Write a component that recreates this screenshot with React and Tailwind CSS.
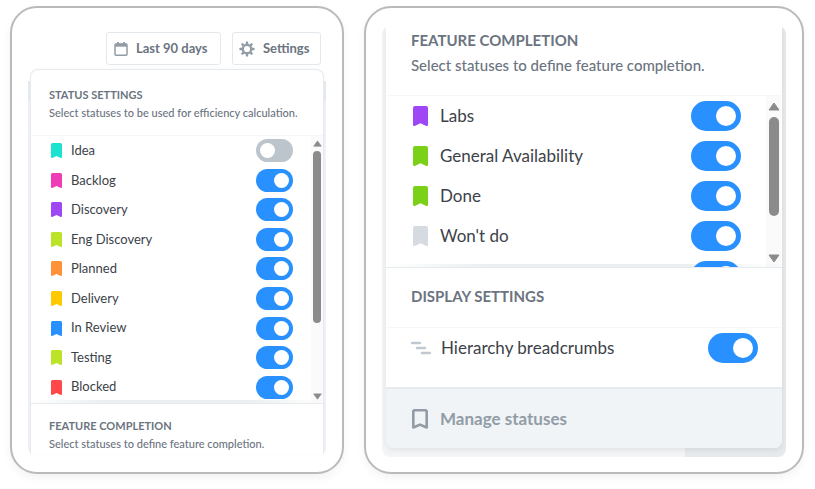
import { useState } from "react";

/* =========================================================
   DATA
========================================================= */
const efficiencyStatuses = [
    { name: "Idea", color: "text-[#1be3cf]", on: false },
    { name: "Backlog", color: "text-[#ef3eb5]", on: true },
    { name: "Discovery", color: "text-[#9f47f5]", on: true },
    { name: "Eng Discovery", color: "text-[#bbe327]", on: true },
    { name: "Planned", color: "text-[#ff9138]", on: true },
    { name: "Delivery", color: "text-[#ffc800]", on: true },
    { name: "In Review", color: "text-[#2891ff]", on: true },
    { name: "Testing", color: "text-[#bbe327]", on: true },
    { name: "Blocked", color: "text-[#ff4949]", on: true },
];

const completionStatuses = [
    { name: "Labs", color: "text-[#9f47f5]", on: true },
    { name: "General Availability", color: "text-[#7ad117]", on: true },
    { name: "Done", color: "text-[#7ad117]", on: true },
    { name: "Won't do", color: "text-[#d5dbe1]", on: true },
    { name: "", color: "text-transparent", on: true },
];

/* =========================================================
   ICONS
========================================================= */
function BookmarkIcon({ className }) {
    return (
        <svg viewBox="0 0 15 20" preserveAspectRatio="none" className={className} aria-hidden="true">
            <path
                d="M2 0h11a2 2 0 0 1 2 2v16.800c0 1-.8 1.500-1.700 1.100L7.500 17.300l-5.800 2.600C.8 20.300 0 19.800 0 18.800V2a2 2 0 0 1 2-2z"
                fill="currentColor"
            />
        </svg>
    );
}

function BookmarkOutlineIcon() {
    return (
        <svg viewBox="0 0 16 20" className="h-5 w-4" aria-hidden="true">
            <path
                d="M2.500 1.300h11a1.200 1.200 0 0 1 1.200 1.200v16L8 15.600l-6.700 2.900v-16a1.200 1.200 0 0 1 1.200-1.200z"
                fill="none"
                stroke="currentColor"
                strokeWidth="2.600"
                strokeLinejoin="round"
            />
        </svg>
    );
}

function CalendarIcon() {
    return (
        <svg viewBox="0 0 14 14" className="size-[14px]" fill="none" aria-hidden="true">
            <rect x="1" y="2" width="12" height="11.200" rx="1" stroke="currentColor" strokeWidth="1.500" />
            <path d="M1 3.200h12" stroke="currentColor" strokeWidth="3" />
            <path d="M4 0v3M10 0v3" stroke="currentColor" strokeWidth="1.800" />
        </svg>
    );
}

function GearIcon() {
    const teeth = [0, 45, 90, 135, 180, 225, 270, 315];

    return (
        <svg viewBox="-8 -8 16 16" className="size-4" aria-hidden="true">
            <circle r="4.200" fill="none" stroke="currentColor" strokeWidth="2.200" />
            {teeth.map((angle) => (
                <path
                    key={angle}
                    d="M-1.400 -4.800L-1 -7.600H1L1.400 -4.800z"
                    fill="currentColor"
                    transform={`rotate(${angle})`}
                />
            ))}
        </svg>
    );
}

function HierarchyIcon() {
    return (
        <svg viewBox="0 0 20 14" className="h-[14px] w-5" aria-hidden="true">
            <path
                d="M1 2h8M6 7h8M11 12h8"
                stroke="currentColor"
                strokeWidth="2.400"
                strokeLinecap="round"
            />
        </svg>
    );
}

/* =========================================================
   SHARED PIECES
========================================================= */
function Toggle({ id, label, defaultOn, large }) {
    const [on, setOn] = useState(defaultOn);

    return (
        <input
            id={id}
            type="checkbox"
            role="switch"
            aria-label={label}
            checked={on}
            onChange={() => setOn(!on)}
            className={`shrink-0 cursor-pointer appearance-none rounded-full bg-[#bcc4cc] before:block before:rounded-full before:bg-white before:content-[''] checked:bg-[#2891ff] ${
                large
                    ? "h-[30px] w-[50px] p-[5px] before:size-5 checked:before:ml-5"
                    : "h-[23px] w-[37px] p-1 before:size-[15px] checked:before:ml-[14px]"
            }`}
        />
    );
}

function Scrollbar({ large, thumb }) {
    return (
        <div
            className={`flex shrink-0 flex-col items-center bg-[#fafafa] text-[#8b8b8b] ${
                large ? "mr-px w-[15px] pt-[6px] pb-1" : "w-3 pt-1 pb-[3px]"
            }`}
        >
            <svg viewBox="0 0 12 9" className={large ? "h-[9px] w-3" : "h-[7px] w-[9px]"} aria-hidden="true">
                <path d="M6 1l5 7H1z" fill="currentColor" stroke="currentColor" strokeLinejoin="round" />
            </svg>
            <div className={`rounded-full bg-[#8b8b8b] ${thumb}`} />
            <svg viewBox="0 0 12 9" className={`mt-auto ${large ? "h-[9px] w-3" : "h-[7px] w-[9px]"}`} aria-hidden="true">
                <path d="M6 8L1 1h10z" fill="currentColor" stroke="currentColor" strokeLinejoin="round" />
            </svg>
        </div>
    );
}

// Soft edge that hints at more rows below the fold
function ListShade() {
    return (
        <div className="pointer-events-none absolute inset-x-0 bottom-0 h-[3px] bg-[linear-gradient(to_right,transparent,#dfe3e5_25%,#dfe3e5_75%,transparent)] opacity-60" />
    );
}

/* =========================================================
   STATUS SETTINGS CARD
========================================================= */
function StatusSettings() {
    const button =
        "flex h-[33px] items-center gap-2 rounded-[3px] border border-[#e3e8ed] bg-white text-[13px] font-bold text-[#6b7480]";

    return (
        <section className="rounded-[27px] border-2 border-[#bababa] bg-white px-4 pt-6 pb-[18px] shadow-[0_4px_10px_rgba(0,0,0,0.05)]">
            <div className="mr-[5px] mb-1 flex justify-end gap-[11px]">
                <button type="button" className={`${button} w-[115px] pl-[7px]`}>
                    <span className="text-[#929ca6]"><CalendarIcon /></span>
                    Last 90 days
                </button>
                <button type="button" className={`${button} w-[89px] pl-[6px]`}>
                    <span className="text-[#929ca6]"><GearIcon /></span>
                    Settings
                </button>
            </div>

            <div className="rounded-b-md bg-[linear-gradient(to_bottom,transparent_12px,#e6ebee_12px,#e6ebee_32px,#f0f3f5_32px)] px-[2px]">
                <div className="rounded-t-lg border-x border-t border-[#e6ebef] bg-white shadow-[0_0_3px_rgba(0,0,0,0.04)]">
                    <div className="h-[66px] border-b border-[#f6f7f8] pt-4 pl-[18px] text-[#6b7480]">
                        <h2 className="text-[11px] leading-[18px] font-bold">STATUS SETTINGS</h2>
                        <p className="text-[11px] leading-[18px] font-medium">
                            Select statuses to be used for efficiency calculation.
                        </p>
                    </div>

                    <div className="relative flex h-[267px]">
                        <ListShade />
                        <ul className="relative mb-px grid flex-1 auto-rows-fr pr-[18px] pl-5">
                            {efficiencyStatuses.map(({ name, color, on }) => (
                                <li key={name} className="flex items-center">
                                    <BookmarkIcon className={`mr-[9px] h-[15px] w-[11px] ${color}`} />
                                    <label htmlFor={name} className="flex-1 text-[13px] text-[#3c4249]">
                                        {name}
                                    </label>
                                    <Toggle id={name} defaultOn={on} />
                                </li>
                            ))}
                        </ul>
                        <Scrollbar thumb="mt-1 h-[172px] w-2" />
                    </div>

                    <div className="h-[51px] border-t border-[#e6ebef] pt-[13px] pl-[18px] text-[#6b7480]">
                        <h2 className="text-[11px] leading-[18px] font-bold">FEATURE COMPLETION</h2>
                        <p className="text-[11px] leading-[18px] font-medium">
                            Select statuses to define feature completion.
                        </p>
                    </div>
                </div>
            </div>
        </section>
    );
}

/* =========================================================
   FEATURE COMPLETION CARD
========================================================= */
function FeatureCompletion() {
    return (
        <section className="rounded-[27px] border-2 border-[#bababa] bg-white px-4 pt-[18px] pb-[15px] shadow-[0_4px_10px_rgba(0,0,0,0.05)]">
            <div className="overflow-hidden rounded-lg bg-[linear-gradient(to_right,#f3f5f7_75%,#e6eaed_75%)] px-1 pb-[9px]">
                <div className="overflow-hidden rounded-b-lg bg-white shadow-[0_2px_6px_rgba(0,0,0,0.08)]">
                    <div className="h-[70px] border-b border-[#f6f7f8] pt-[2px] pl-[25px] text-[#6b7480]">
                        <h2 className="text-[15px] leading-[25px] font-bold">FEATURE COMPLETION</h2>
                        <p className="text-[15px] leading-[25px] font-medium">
                            Select statuses to define feature completion.
                        </p>
                    </div>

                    <div className="relative flex h-[171px] overflow-hidden">
                        <ListShade />
                        <ul className="relative flex-1 pr-[25px] pl-[27px]">
                            {completionStatuses.map(({ name, color, on }) => (
                                <li key={name} className="flex h-10 items-center">
                                    <BookmarkIcon className={`mr-3 h-5 w-[15px] ${color}`} />
                                    <label htmlFor={`done-${name}`} className="flex-1 text-[17px] text-[#3c4249]">
                                        {name}
                                    </label>
                                    <Toggle id={`done-${name}`} label={name || "More"} defaultOn={on} large />
                                </li>
                            ))}
                        </ul>
                        <Scrollbar large thumb="mt-[6px] h-[99px] w-[10px]" />
                    </div>

                    <div className="h-[61px] border-y border-t-[#e6ebef] border-b-[#f6f7f8] pt-4 pl-[25px]">
                        <h2 className="text-[15px] leading-[25px] font-bold text-[#6b7480]">DISPLAY SETTINGS</h2>
                    </div>

                    <div className="flex h-[59px] items-start pt-[5px] pr-6 pl-[25px]">
                        <div className="flex h-[30px] flex-1 items-center gap-[10px]">
                            <span className="text-[#c0c8d0]"><HierarchyIcon /></span>
                            <label htmlFor="breadcrumbs" className="text-[17px] text-[#3c4249]">
                                Hierarchy breadcrumbs
                            </label>
                        </div>
                        <Toggle id="breadcrumbs" defaultOn large />
                    </div>

                    <button
                        type="button"
                        className="flex h-[61px] w-full items-center gap-3 border-t-2 border-[#e5eaee] bg-[#f0f4f7] pl-[26px] text-[17px] font-bold text-[#929ca6]"
                    >
                        <BookmarkOutlineIcon />
                        Manage statuses
                    </button>
                </div>
            </div>
        </section>
    );
}

export default function App() {
    return (
        <main className="grid min-h-screen grid-cols-[334fr_440fr] items-start gap-5 bg-white pt-[6px] pr-[11px] pl-[10px] font-['Lato',sans-serif]">
            <StatusSettings />
            <FeatureCompletion />
        </main>
    );
}
